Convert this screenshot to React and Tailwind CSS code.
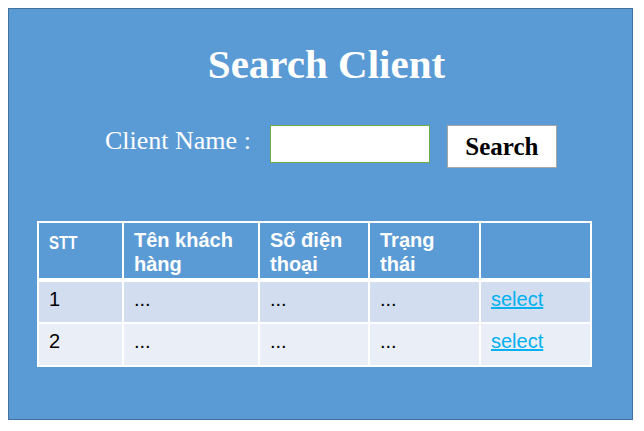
export default function App() {
  const serif = { fontFamily: '"Liberation Serif", "Times New Roman", serif' };
  const sans = { fontFamily: '"Liberation Sans", Arial, sans-serif' };
  const rows = ["1", "2"];
  return (
    <div className="w-[644px] h-[431px] bg-white pt-[8px] pl-[8px]">
      <div className="w-[625px] h-[412px] bg-[#5b9bd5] border border-[#41719c] flex flex-col items-center">
        <h1 className="mt-[31px] text-white font-bold text-[41px] leading-[48px] ml-[12px]" style={serif}>
          Search Client
        </h1>
        <div className="mt-[37px] flex items-start w-full pl-[96px]">
          <span className="text-white text-[26px] leading-[30px] mt-[1px]" style={serif}>Client Name :</span>
          <div className="ml-[19px] w-[160px] h-[38px] bg-white border border-[#70ad47]"></div>
          <button className="ml-[17px] w-[110px] h-[43px] bg-white border border-[#a6a6a6] text-black font-bold text-[25px] leading-[28px] pt-[1px]" style={serif}>
            Search
          </button>
        </div>
        <table className="mt-[53px] border-collapse self-start ml-[28px]" style={sans}>
          <thead>
            <tr className="h-[58px] bg-[#5b9bd5] text-white font-bold align-top">
              <th className="w-[85px] border-2 border-white border-b-[4px] text-left pl-[10px] pt-[10px] text-[15px] leading-[16px] font-bold">
                <span className="inline-block scale-y-[1.25] origin-top">STT</span>
              </th>
              <th className="w-[136px] border-2 border-white border-b-[4px] text-left pl-[10px] pt-[5px] text-[20px] leading-[24px] font-bold">Tên khách<br />hàng</th>
              <th className="w-[110px] border-2 border-white border-b-[4px] text-left pl-[10px] pt-[5px] text-[20px] leading-[24px] font-bold">Số điện<br />thoại</th>
              <th className="w-[111px] border-2 border-white border-b-[4px] text-left pl-[10px] pt-[5px] text-[20px] leading-[24px] font-bold">Trạng<br />thái</th>
              <th className="w-[111px] border-2 border-white border-b-[4px]"></th>
            </tr>
          </thead>
          <tbody>
            {rows.map((r, i) => (
              <tr key={r} className={`h-[43px] align-top text-black text-[20px] leading-[24px] ${i === 0 ? "bg-[#d2deef]" : "bg-[#eaeff7]"}`}>
                <td className="border-2 border-white pl-[10px] pt-[5px]">{r}</td>
                <td className="border-2 border-white pl-[10px] pt-[5px]">...</td>
                <td className="border-2 border-white pl-[10px] pt-[5px]">...</td>
                <td className="border-2 border-white pl-[10px] pt-[5px]">...</td>
                <td className="border-2 border-white pl-[10px] pt-[5px]">
                  <a href="#" className="text-[#00b0f0] underline">select</a>
                </td>
              </tr>
            ))}
          </tbody>
        </table>
      </div>
    </div>
  );
}
